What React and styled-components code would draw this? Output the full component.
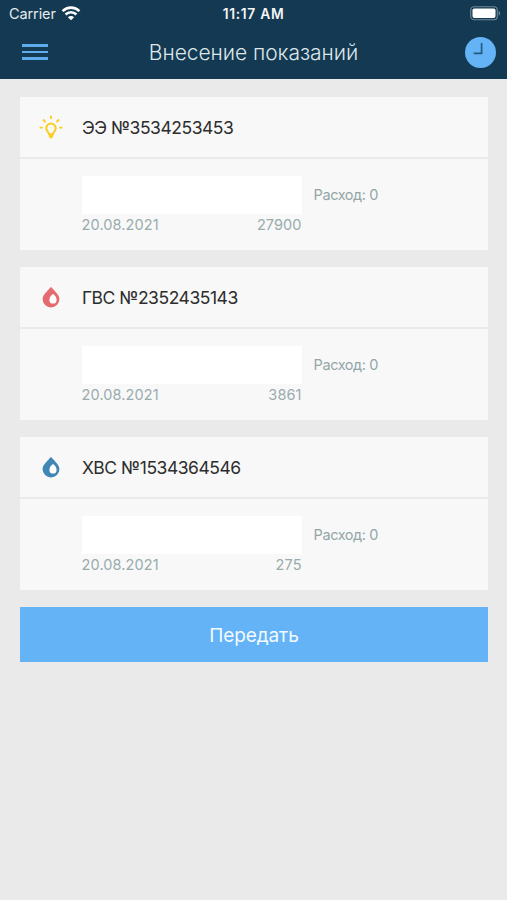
import React from "react";
import styled, { createGlobalStyle } from "styled-components";

const meters = [
  { id: 1, type: "light", title: "ЭЭ №3534253453", date: "20.08.2021", value: "27900" },
  { id: 2, type: "hot", title: "ГВС №2352435143", date: "20.08.2021", value: "3861" },
  { id: 3, type: "cold", title: "ХВС №1534364546", date: "20.08.2021", value: "275" },
];

function BulbIcon() {
  return (
    <svg width="24" height="24" viewBox="0 0 24 24" fill="none" stroke="#fbce22">
      <path
        d="M12 8.5a4.7 4.7 0 0 0-4.7 4.7c0 2.500 2 3.400 2.800 6.100h3.800c.8-2.700 2.800-3.600 2.800-6.100A4.700 4.700 0 0 0 12 8.500Z"
        strokeWidth="2.1"
      />
      <path d="M9.900 19.400h4.200v2.300l-1.100 1.600h-2l-1.100-1.600z" fill="#fbce22" stroke="none" />
      <path
        d="M12 .8v3.200M4 4.500l2.600 2.600M20 4.500l-2.600 2.600M.6 12.600h3.200M20.200 12.600h3.200"
        strokeWidth="1.900"
      />
    </svg>
  );
}

function DropIcon({ color }) {
  return (
    <svg width="24" height="24" viewBox="0 0 24 24">
      <path
        d="M12 2.300c1 .2 1.700 1.400 2.600 2.500 2.600 2.900 5.800 5.600 5.800 9.500A8.400 8.100 0 0 1 3.600 14.300c0-3.900 3.200-6.600 5.800-9.500 .9-1.100 1.600-2.300 2.600-2.500Z"
        fill={color}
      />
      <path
        d="M14 9c1.700 1.200 3.600 3.200 3.600 5.700a3.600 3.900 0 0 1-7.200 0c0-2.500 1.900-4.500 3.600-5.700Z"
        fill="#fff"
      />
    </svg>
  );
}

function MeterIcon({ type }) {
  if (type === "light") return <BulbIcon />;
  return <DropIcon color={type === "hot" ? "#e46c70" : "#4087b5"} />;
}

function WifiIcon() {
  return (
    <svg width="20" height="15" viewBox="0 0 20 15" fill="none" stroke="#fff" strokeWidth="2.600">
      <path d="M1.600 5.100a12 12 0 0 1 16.800 0" />
      <path d="M4.600 8.500a7.700 7.700 0 0 1 10.800 0" />
      <path d="M10 14.300 6.900 11.200a4.400 4.400 0 0 1 6.200 0z" fill="#fff" stroke="none" />
    </svg>
  );
}

function BatteryIcon() {
  return (
    <svg width="31" height="15" viewBox="0 0 31 15">
      <rect x=".7" y=".7" width="26.600" height="13" rx="3.500" fill="none" stroke="#718896" strokeWidth="1.100" />
      <rect x="2.500" y="2.400" width="23" height="9.600" rx="1.900" fill="#fff" />
      <path d="M28.700 4.900c1.900.6 1.900 4 0 4.600z" fill="#718896" />
    </svg>
  );
}

function App() {
  return (
    <Screen>
      <GlobalStyle />
      <Header>
        <StatusBar>
          <Carrier>
            Carrier <WifiIcon />
          </Carrier>
          <Time>11:17 AM</Time>
          <BatteryIcon />
        </StatusBar>
        <NavBar>
          <MenuButton aria-label="Меню">
            <MenuLine />
            <MenuLine />
            <MenuLine />
          </MenuButton>
          <Title>Внесение показаний</Title>
          <HistoryButton aria-label="История">
            <svg width="31" height="31" viewBox="0 0 31 31">
              <circle cx="15.500" cy="15.500" r="15.500" fill="#63b3f6" />
              <path d="M16.600 6v10.300H8.700" fill="none" stroke="#245b82" strokeWidth="1.700" />
            </svg>
          </HistoryButton>
        </NavBar>
      </Header>

      <Content>
        {meters.map((meter) => (
          <Card key={meter.id}>
            <CardHeader>
              <MeterIcon type={meter.type} />
              <CardTitle>{meter.title}</CardTitle>
            </CardHeader>
            <CardBody>
              <Reading>
                <Input aria-label={meter.title} />
                <Previous>
                  <span>{meter.date}</span>
                  <span>{meter.value}</span>
                </Previous>
              </Reading>
              <Usage>Расход: 0</Usage>
            </CardBody>
          </Card>
        ))}
        <SubmitButton>Передать</SubmitButton>
      </Content>
    </Screen>
  );
}

const GlobalStyle = createGlobalStyle`
  * {
    box-sizing: border-box;
  }

  body {
    margin: 0;
    background: #eaeaea;
    font-family: Inter, "Liberation Sans", sans-serif;
  }

  button, input {
    padding: 0;
    border: 0;
    border-radius: 0;
    font: inherit;
    outline: none;
  }
`;

const Screen = styled.div`
  min-height: 900px;
  background: #eaeaea;
`;

const Header = styled.header`
  height: 79px;
  background: #133a52;
  color: #fff;
`;

const StatusBar = styled.div`
  display: grid;
  grid-template-columns: 1fr auto 1fr;
  align-items: center;
  height: 27px;
  padding: 0 6px;

  > svg {
    justify-self: end;
  }
`;

const Carrier = styled.div`
  display: flex;
  align-items: center;
  gap: 5px;
  padding-left: 3px;
  font-size: 14.5px;
  letter-spacing: -0.1px;
  color: #e6ebee;
`;

const Time = styled.div`
  font-size: 13.8px;
  font-weight: 600;
  letter-spacing: 0.7px;
  color: #f3f5f6;
`;

const NavBar = styled.div`
  display: grid;
  grid-template-columns: 1fr auto 1fr;
  align-items: center;
  height: 50px;
  padding: 0 11px;
`;

const MenuButton = styled.button`
  display: flex;
  flex-direction: column;
  gap: 4px;
  width: 26px;
  margin-left: 11px;
  background: none;
`;

const MenuLine = styled.span`
  height: 2.4px;
  background: #5eaceb;
`;

const Title = styled.h1`
  margin: 0;
  font-size: 21px;
  font-weight: 300;
  letter-spacing: -0.05px;
  color: #dfe6ea;
`;

const HistoryButton = styled.button`
  display: flex;
  justify-self: end;
  background: none;
`;

const Content = styled.main`
  display: flex;
  flex-direction: column;
  gap: 17px;
  padding: 18px 19.5px 0 20.4px;
`;

const Card = styled.section`
  height: 153px;
  background: #f8f8f8;
`;

const CardHeader = styled.div`
  display: flex;
  align-items: center;
  gap: 18.9px;
  height: 62px;
  padding-left: 18.6px;
  border-bottom: 2px solid #e9eaea;
`;

const CardTitle = styled.h2`
  margin: 0;
  padding-top: 1px;
  font-size: 17.5px;
  font-weight: 400;
  letter-spacing: -0.47px;
  color: #2d2d2d;
`;

const CardBody = styled.div`
  display: flex;
  gap: 12px;
  padding: 17px 0 0 61.2px;
`;

const Reading = styled.div`
  width: 220px;
`;

const Input = styled.input`
  display: block;
  width: 100%;
  height: 37.5px;
  background: #fff;
`;

const Previous = styled.div`
  display: flex;
  justify-content: space-between;
  margin-top: 1px;
  font-size: 14.5px;
  line-height: 20px;
  letter-spacing: 0.1px;
  color: #99abad;
`;

const Usage = styled.div`
  font-size: 14.5px;
  line-height: 38px;
  letter-spacing: -0.42px;
  color: #94a6a8;
`;

const SubmitButton = styled.button`
  height: 54.5px;
  padding-top: 2px;
  background: #63b3f6;
  color: #f3faff;
  font-size: 19px;
  letter-spacing: -0.1px;
`;

export default App;
